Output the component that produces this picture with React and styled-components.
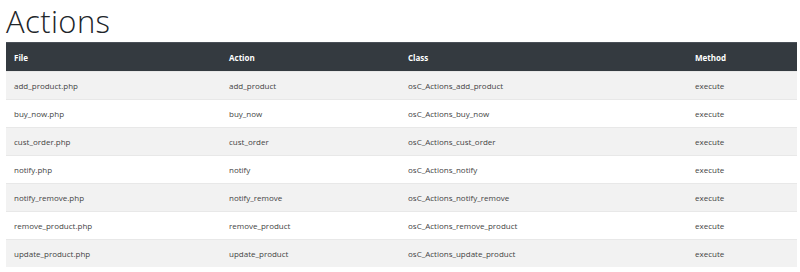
import React from "react";
import styled, { createGlobalStyle } from "styled-components";

const GlobalStyle = createGlobalStyle`
  body {
    margin: 0;
    background: #ffffff;
    font-family: "Open Sans", "Noto Sans", sans-serif;
    color: #212529;
  }
`;

const actions = [
  ["add_product.php", "add_product", "osC_Actions_add_product", "execute"],
  ["buy_now.php", "buy_now", "osC_Actions_buy_now", "execute"],
  ["cust_order.php", "cust_order", "osC_Actions_cust_order", "execute"],
  ["notify.php", "notify", "osC_Actions_notify", "execute"],
  ["notify_remove.php", "notify_remove", "osC_Actions_notify_remove", "execute"],
  ["remove_product.php", "remove_product", "osC_Actions_remove_product", "execute"],
  ["update_product.php", "update_product", "osC_Actions_update_product", "execute"],
];

const columns = [
  { label: "File", width: 215 },
  { label: "Action", width: 179 },
  { label: "Class", width: 287 },
  { label: "Method", width: 110 },
];

const App = () => {
  return (
    <Page>
      <GlobalStyle />
      <Title>Actions</Title>
      <Table>
        <colgroup>
          {columns.map((c) => (
            <col key={c.label} style={{ width: c.width }} />
          ))}
        </colgroup>
        <thead>
          <tr>
            {columns.map((c) => (
              <HeadCell key={c.label}>{c.label}</HeadCell>
            ))}
          </tr>
        </thead>
        <tbody>
          {actions.map((row, i) => (
            <Row key={row[0]} $striped={i % 2 === 0}>
              {row.map((cell, j) => (
                <Cell key={j}>{cell}</Cell>
              ))}
            </Row>
          ))}
        </tbody>
      </Table>
    </Page>
  );
};

const Page = styled.div`
  padding: 0 3px 0 6px;
`;

const Title = styled.h1`
  margin: 0;
  font-family: "Open Sans", "Noto Sans", sans-serif;
  font-weight: 300;
  font-size: 31px;
  line-height: 42px;
  color: #212529;
  letter-spacing: 0.4px;
`;

const Table = styled.table`
  width: 791px;
  border-collapse: collapse;
  table-layout: fixed;
  font-size: 8px;
`;

const HeadCell = styled.th`
  height: 28px;
  padding: 0 8px;
  text-align: left;
  font-weight: 700;
  color: #ffffff;
  background: #343a40;
  border-top: 1px solid #4a5058;
`;

const Row = styled.tr`
  background: ${(p) => (p.$striped ? "#f2f2f2" : "#ffffff")};
`;

const Cell = styled.td`
  height: 27px;
  padding: 0 8px;
  color: #444;
  border-top: 1px solid #e8e8e8;
`;

export default App;
